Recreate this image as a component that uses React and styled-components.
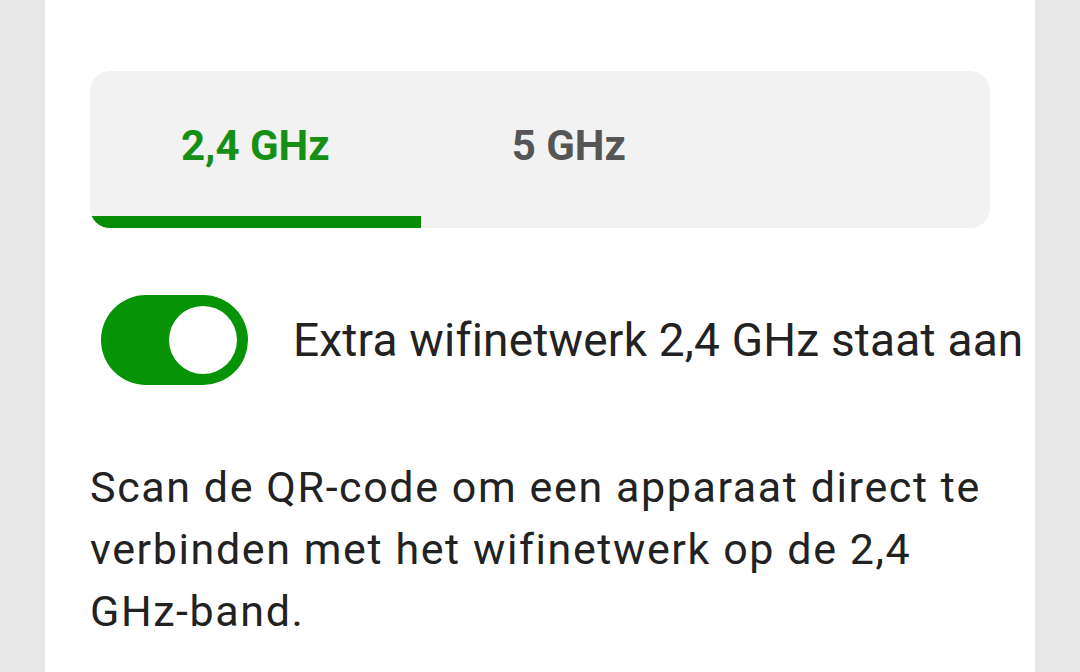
import React, { useState } from 'react';
import styled, { createGlobalStyle } from 'styled-components';

const GlobalStyle = createGlobalStyle`
  html, body {
    margin: 0;
    padding: 0;
    background: #e8e8e8;
    font-family: Roboto, "Noto Sans", Arial, sans-serif;
  }
`;

const Page = styled.div`
  width: 1080px;
  height: 672px;
  display: flex;
  justify-content: center;
  overflow: hidden;
`;

const Card = styled.div`
  width: 900px;
  height: 100%;
  background: #fff;
  padding: 71px 45px 0;
`;

const Tabs = styled.div`
  display: flex;
  height: 157px;
  background: #f2f2f2;
  border-radius: 20px;
  overflow: hidden;
`;

const Tab = styled.button`
  position: relative;
  border: 0;
  background: transparent;
  padding: 4px 91px 12px;
  font-family: Roboto, Arial, sans-serif;
  font-weight: 700;
  font-size: 42px;
  color: ${(p) => (p.$active ? '#168f16' : '#555')};
  cursor: pointer;

  &::after {
    content: '';
    position: absolute;
    left: 0;
    right: 0;
    bottom: 0;
    height: 12px;
    background: ${(p) => (p.$active ? '#078c07' : 'transparent')};
  }
`;

const SwitchRow = styled.div`
  display: flex;
  align-items: center;
  gap: 45px;
  margin-top: 67px;
  padding-left: 11px;
`;

const Switch = styled.button`
  flex: none;
  width: 147px;
  height: 90px;
  border: 0;
  border-radius: 45px;
  background: ${(p) => (p.$on ? '#069406' : '#bbb')};
  padding: 11px;
  display: flex;
  justify-content: ${(p) => (p.$on ? 'flex-end' : 'flex-start')};
  cursor: pointer;
`;

const Knob = styled.span`
  width: 68px;
  height: 68px;
  border-radius: 50%;
  background: #fff;
`;

const SwitchLabel = styled.span`
  font-size: 46px;
  letter-spacing: 0.2px;
  color: #222;
  white-space: nowrap;
`;

const Description = styled.p`
  margin: 71px 0 0;
  font-size: 43px;
  line-height: 62px;
  letter-spacing: 1.6px;
  color: #222;
`;

export default function App() {
  const [band, setBand] = useState('2.4');
  const [on, setOn] = useState(true);
  return (
    <>
      <GlobalStyle />
      <Page>
        <Card>
          <Tabs>
            <Tab $active={band === '2.4'} onClick={() => setBand('2.4')}>2,4 GHz</Tab>
            <Tab $active={band === '5'} onClick={() => setBand('5')}>5 GHz</Tab>
          </Tabs>
          <SwitchRow>
            <Switch $on={on} onClick={() => setOn(!on)}>
              <Knob />
            </Switch>
            <SwitchLabel>Extra wifinetwerk 2,4 GHz staat aan</SwitchLabel>
          </SwitchRow>
          <Description>
            Scan de QR-code om een apparaat direct te verbinden met het wifinetwerk op de 2,4 GHz-band.
          </Description>
        </Card>
      </Page>
    </>
  );
}
